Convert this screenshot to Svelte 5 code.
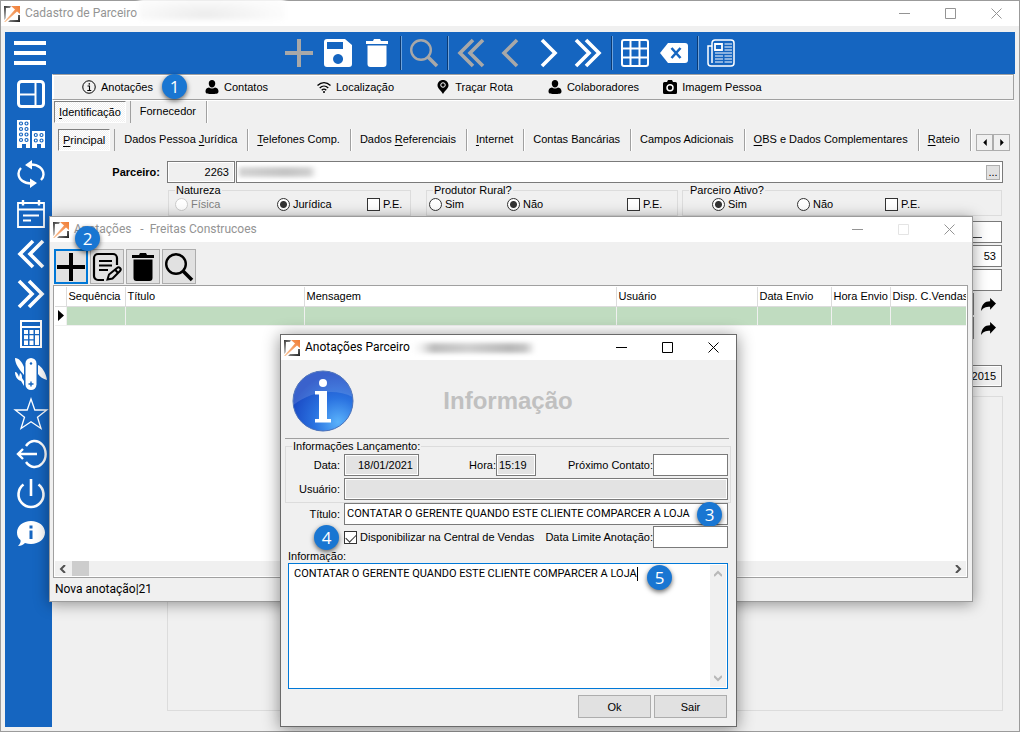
<script lang="ts">
    const shortcuts = [
        { icon: 'info', label: 'Anotações' },
        { icon: 'person', label: 'Contatos' },
        { icon: 'wifi', label: 'Localização' },
        { icon: 'pin', label: 'Traçar Rota' },
        { icon: 'person', label: 'Colaboradores' },
        { icon: 'camera', label: 'Imagem Pessoa' },
    ];

    const toolbar = [
        { icon: 'plus', label: 'Novo', off: true },
        { icon: 'save', label: 'Salvar' },
        { icon: 'trash', label: 'Excluir' },
        null,
        { icon: 'search', label: 'Pesquisar', off: true },
        null,
        { icon: 'first', label: 'Primeiro', off: true },
        { icon: 'prev', label: 'Anterior', off: true },
        { icon: 'next', label: 'Próximo' },
        { icon: 'last', label: 'Último' },
        null,
        { icon: 'grid', label: 'Grade' },
        { icon: 'clear', label: 'Limpar' },
        null,
        { icon: 'news', label: 'Relatório' },
    ];

    const sidebar = [
        { icon: 'layout', label: 'Painel' },
        { icon: 'buildings', label: 'Empresas' },
        { icon: 'sync', label: 'Atualizar' },
        { icon: 'calendar', label: 'Agenda' },
        { icon: 'first', label: 'Voltar' },
        { icon: 'last', label: 'Avançar' },
        { icon: 'calc', label: 'Calculadora' },
        { icon: 'knife', label: 'Ferramentas' },
        { icon: 'star', label: 'Favoritos' },
        { icon: 'exit', label: 'Trocar usuário' },
        { icon: 'power', label: 'Desligar' },
        { icon: 'bubble', label: 'Ajuda' },
    ];

    // [before, access key, after]
    const tabs = [
        ['', 'P', 'rincipal'],
        ['Dados Pessoa ', 'J', 'urídica'],
        ['', 'T', 'elefones Comp.'],
        ['Dados ', 'R', 'eferenciais'],
        ['', 'I', 'nternet'],
        ['Contas Bancárias', '', ''],
        ['Campos Adicionais', '', ''],
        ['', 'O', 'BS e Dados Complementares'],
        ['', 'R', 'ateio'],
    ];

    const noteTools = [
        { icon: 'plus', label: 'Nova anotação' },
        { icon: 'edit', label: 'Editar anotação' },
        { icon: 'trash', label: 'Excluir anotação' },
        { icon: 'search', label: 'Pesquisar anotação' },
    ];

    const columns = [
        { label: 'Sequência', cls: 'seq' },
        { label: 'Título', cls: 'title-col' },
        { label: 'Mensagem', cls: 'msg' },
        { label: 'Usuário', cls: 'user' },
        { label: 'Data Envio', cls: 'date' },
        { label: 'Hora Envio', cls: 'hour' },
        { label: 'Disp. C.Vendas', cls: 'disp' },
    ];

    let activeTab = $state(0);
    let natureza = $state('juridica');
    let rural = $state('nao');
    let ativo = $state('sim');
    let titulo = $state('CONTATAR O GERENTE QUANDO ESTE CLIENTE COMPARCER A LOJA');
    let informacao = $state('CONTATAR O GERENTE QUANDO ESTE CLIENTE COMPARCER A LOJA');
    let disponivel = $state(true);
</script>

{#snippet icon(name: string)}
    <svg class="icon" viewBox="0 0 28 28" fill="none" stroke="currentColor" stroke-width="2" aria-hidden="true">
        {#if name === 'plus'}
            <path d="M14 0v28M0 14h28" stroke-width="4" />
        {:else if name === 'save'}
            <path d="M3 0h18l7 6v19a3 3 0 0 1-3 3H3a3 3 0 0 1-3-3V3a3 3 0 0 1 3-3zM3 3v7h16V3zM14 15a5 5 0 1 0 .1 0z" fill="currentColor" fill-rule="evenodd" stroke="none" />
        {:else if name === 'trash'}
            <path d="M3 2h7l1-2h6l1 2h7v3H3zM4.500 6.500h19v18.500a3 3 0 0 1-3 3h-13a3 3 0 0 1-3-3z" fill="currentColor" stroke="none" />
        {:else if name === 'search'}
            <circle cx="11" cy="11" r="9.800" stroke-width="2.400" />
            <path d="M18 18l9 9" stroke-width="3.600" />
        {:else if name === 'first'}
            <path d="M16 1L3 14l13 13M26 1L13 14l13 13" stroke-width="3.600" />
        {:else if name === 'prev'}
            <path d="M21 1L8 14l13 13" stroke-width="3.600" />
        {:else if name === 'next'}
            <path d="M7 1l13 13L7 27" stroke-width="3.600" />
        {:else if name === 'last'}
            <path d="M2 1l13 13L2 27M12 1l13 13L12 27" stroke-width="3.600" />
        {:else if name === 'grid'}
            <rect x="1" y="1" width="26" height="26" rx="2" />
            <path d="M9.500 1v26M18.500 1v26M1 9.500h26M1 18.500h26" />
        {:else if name === 'clear'}
            <path d="M8 4h17a3 3 0 0 1 3 3v14a3 3 0 0 1-3 3H8L0 14z" fill="currentColor" stroke="none" />
            <path d="M11.500 9l9 10M20.500 9l-9 10" stroke="#1565c0" stroke-width="2.600" />
        {:else if name === 'news'}
            <path d="M5 24V4a3 3 0 0 1 3-3h16a3 3 0 0 1 3 3v20a3 3 0 0 1-3 3H4a3 3 0 0 1-3-3V7h4" stroke-width="1.500" />
            <path d="M8 5h7v6H8z" stroke-width="1.800" />
            <path d="M17.500 5H25M17.500 8H25M17.500 11H25M8 14h17M8 17h8M17.500 17H25M8 20h8M17.500 20H25M8 23h8M17.500 23H25" stroke-width="1" />
        {:else if name === 'layout'}
            <rect x="1.500" y="1.500" width="25" height="25" rx="3" stroke-width="3" />
            <path d="M18.500 3v22M2 14.500h16" />
        {:else if name === 'buildings'}
            <path d="M0 0h13v28H9v-4H5v4H0zM15 11h13v17h-4v-4h-4v4h-5z" fill="currentColor" stroke="none" />
            <g fill="#fff" stroke="#1565c0" stroke-width="1.200">
                <circle cx="4" cy="3.500" r="1.500" /><circle cx="9.500" cy="3.500" r="1.500" />
                <circle cx="4" cy="9" r="1.500" /><circle cx="9.500" cy="9" r="1.500" />
                <circle cx="4" cy="14.500" r="1.500" /><circle cx="9.500" cy="14.500" r="1.500" />
                <circle cx="4" cy="20" r="1.500" /><circle cx="9.500" cy="20" r="1.500" />
                <circle cx="18.800" cy="15" r="1.500" /><circle cx="24.500" cy="15" r="1.500" />
                <circle cx="18.800" cy="20.500" r="1.500" /><circle cx="24.500" cy="20.500" r="1.500" />
            </g>
        {:else if name === 'sync'}
            <path d="M14 4.500c7 0 12.500 4 12.500 10 0 2-1 4-2.500 5.500M14 23.500c-7 0-12.500-4-12.500-10 0-2 1-4 2.500-5.500" stroke-width="2.400" />
            <path d="M8 5l7-5v9.500zM20 23l-7 5v-9.500z" fill="currentColor" stroke="none" />
        {:else if name === 'calendar'}
            <path d="M1 3h26v24H1zM1 9.500h26M6 15.500h16M6 20.500h8" stroke-width="1.800" />
            <path d="M6 0v5.500M22 0v5.500" stroke-width="2.400" />
        {:else if name === 'calc'}
            <path d="M4 1h20v26H4zM4 7h20" stroke-width="2" />
            <path d="M7 10h4v4H7zM12.500 10h4v4h-4zM18 10h4v4h-4zM7 15.200h4v4H7zM12.500 15.200h4v4h-4zM18 15.200h4V25h-4zM7 20.500h4V25H7zM12.500 20.500h4V25h-4z" fill="currentColor" stroke="none" />
        {:else if name === 'knife'}
            <rect x="8.500" y="-2" width="11" height="32" rx="5.500" fill="currentColor" stroke="none" />
            <path d="M21 5c3 1 8 7 9 15-4-1-7-3-9-6zM-2-2c4 0 7 4 9 9v8C2 9-2 4-2-2zM-2 12c2 0 3 2 4 5l1-4c2 1 2 3 2 5l2 3v5l-3-5c-4-1-6-5-6-9z" fill="currentColor" stroke="none" />
            <path d="M14 21.500v5M11.500 24h5" stroke="#1565c0" stroke-width="1.400" />
            <circle cx="14" cy="3.500" r="1.200" fill="#1565c0" stroke="none" />
        {:else if name === 'star'}
            <path d="M14-1l3.800 11h12L20.500 17.200 24 28.500 14 21.700 4 28.500l3.500-11.300L-1.800 10h12z" stroke-width="1.300" />
        {:else if name === 'exit'}
            <path d="M9 6A11 13 0 1 1 9 22M1 14h19M6 9l-5 5 5 5" stroke-width="2.400" />
        {:else if name === 'power'}
            <path d="M6.500 4.500a12.500 12.500 0 1 0 15 0M14-1v17" stroke-width="2.600" />
        {:else if name === 'bubble'}
            <path d="M14 1c8 0 14 5 14 11.500S22 24 14 24c-2 0-4-.3-6-1-2 2-4 3-7 3 2-2 3-4 2.500-6C1 18 0 15.500 0 12.500 0 6 6 1 14 1z" fill="currentColor" stroke="none" />
            <path d="M14 10.500V19M14 5.500v3" stroke="#1565c0" stroke-width="3" />
        {:else if name === 'edit'}
            <path d="M11 27H5a4 4 0 0 1-4-4V5a4 4 0 0 1 4-4h15a4 4 0 0 1 4 4v7M6 8h13M6 12.500h13M6 17h9" stroke-width="2.200" />
            <path d="M14.500 26.500l1.500-5 8-6.500a2 2 0 0 1 3 3l-7.500 7.500zM22 16.500l3 3.500" stroke-width="2" />
        {:else if name === 'info'}
            <circle cx="14" cy="14" r="12.500" />
            <path d="M11 12h4v8M10.500 21h8M14.500 6v3.500" stroke-width="2.200" />
        {:else if name === 'person'}
            <path d="M14 0c4 0 6.500 3 6.500 7S18 15 14 15 7.500 11 7.500 7 10 0 14 0zM8 15c3 2.500 9 2.500 12 0 5 1 7 3 7 8s-6 5-13 5-13 0-13-5 2-7 7-8z" fill="currentColor" stroke="none" />
        {:else if name === 'wifi'}
            <path d="M1 11c8-7.500 18-7.500 26 0M5.500 16c5-5 12-5 17 0M9.500 20.500c3-3 6-3 9 0" stroke-width="2.800" />
            <circle cx="14" cy="24" r="2" fill="currentColor" stroke="none" />
        {:else if name === 'pin'}
            <path d="M14 0c6 0 11 4.500 11 10.500C25 17 18 21 14 28 10 21 3 17 3 10.500 3 4.500 8 0 14 0z" fill="currentColor" stroke="none" />
            <circle cx="14" cy="10" r="4.500" stroke="#fff" />
        {:else if name === 'camera'}
            <path d="M3 4h5l2-4h8l2 4h5a3 3 0 0 1 3 3v18a3 3 0 0 1-3 3H3a3 3 0 0 1-3-3V7a3 3 0 0 1 3-3z" fill="currentColor" stroke="none" />
            <circle cx="14" cy="15.500" r="6" stroke="#fff" stroke-width="3" />
        {:else if name === 'forward'}
            <path d="M28 12L17 2v6C7 8 1 14 0 26c4-6 8-8 17-8v6z" fill="currentColor" stroke="none" />
        {/if}
    </svg>
{/snippet}

{#snippet titleBar(title: string, id: string)}
    <header class="titlebar">
        <svg class="logo" viewBox="0 0 16 16" aria-hidden="true">
            <defs>
                <linearGradient id="{id}-frame" x1="0" y1="0" x2="1" y2="1">
                    <stop offset="0" stop-color="#333" />
                    <stop offset=".4" stop-color="#bbb" />
                    <stop offset="1" stop-color="#1c1c1c" />
                </linearGradient>
                <linearGradient id="{id}-arrow" x1="0" y1="1" x2="1" y2="0">
                    <stop offset="0" stop-color="#fbc9a0" />
                    <stop offset="1" stop-color="#f07c34" />
                </linearGradient>
            </defs>
            <path d="M0 0h7L6 2H2v10l-2 2zM16 9v7H4l2-2h8V9z" fill="url(#{id}-frame)" />
            <path d="M7 0h9v8l-3-2.500L1.500 16H0L11 3.500z" fill="url(#{id}-arrow)" />
        </svg>
        <h1>{title}</h1>
        <span class="redacted" aria-hidden="true"></span>
        <div class="controls">
            <button aria-label="Minimizar"><svg viewBox="0 0 11 11"><path d="M0 5.500h11" /></svg></button>
            <button class="max" aria-label="Maximizar"><svg viewBox="0 0 11 11"><path d="M.5.500h10v10H.5z" /></svg></button>
            <button aria-label="Fechar"><svg viewBox="0 0 11 11"><path d="M.5.500l10 10M10.500.500l-10 10" /></svg></button>
        </div>
    </header>
{/snippet}

<main class="window app">
    {@render titleBar('Cadastro de Parceiro', 'app')}

    <div class="frame">
        <div class="topbar">
            <button class="burger" aria-label="Menu"><i></i><i></i><i></i></button>
            <div class="tools">
                {#each toolbar as item}
                    {#if item}
                        <button class="tool" disabled={item.off} aria-label={item.label}>{@render icon(item.icon)}</button>
                    {:else}
                        <span class="tool-sep"></span>
                    {/if}
                {/each}
            </div>
        </div>

        <div class="columns">
            <nav class="sidebar">
                {#each sidebar as item}
                    <button aria-label={item.label}>{@render icon(item.icon)}</button>
                {/each}
            </nav>

            <section class="content">
                <div class="shortcuts">
                    {#each shortcuts as item}
                        <button>{@render icon(item.icon)}{item.label}</button>
                    {/each}
                </div>

                <div class="tabs main-tabs">
                    <button class="tab active"><u>I</u>dentificação</button>
                    <button class="tab">Fornecedor</button>
                </div>

                <div class="tabs sub-tabs">
                    {#each tabs as [before, key, after], i}
                        <button class="tab" class:active={i === activeTab} onclick={() => (activeTab = i)}>{before}<u>{key}</u>{after}</button>
                    {/each}
                    <div class="tab-scroll">
                        <button aria-label="Abas anteriores"><svg viewBox="0 0 4 8"><path d="M4 0v8L0 4z" /></svg></button>
                        <button aria-label="Próximas abas"><svg viewBox="0 0 4 8"><path d="M0 0v8l4-4z" /></svg></button>
                    </div>
                </div>

                <form class="partner">
                    <div class="code-row">
                        <label for="code">Parceiro:</label>
                        <input id="code" class="field readonly right" value="2263" readonly />
                        <div class="field lookup">
                            <span class="redacted" aria-hidden="true"></span>
                            <button type="button" aria-label="Buscar parceiro">...</button>
                        </div>
                    </div>

                    <div class="groups">
                        <fieldset class="natureza">
                            <legend>Natureza</legend>
                            <label class="muted"><input type="radio" bind:group={natureza} value="fisica" disabled />Física</label>
                            <label><input type="radio" bind:group={natureza} value="juridica" />Jurídica</label>
                            <label><input type="checkbox" />P.E.</label>
                        </fieldset>
                        <fieldset class="rural">
                            <legend>Produtor Rural?</legend>
                            <label><input type="radio" bind:group={rural} value="sim" />Sim</label>
                            <label><input type="radio" bind:group={rural} value="nao" />Não</label>
                            <label><input type="checkbox" />P.E.</label>
                        </fieldset>
                        <fieldset class="ativo">
                            <legend>Parceiro Ativo?</legend>
                            <label><input type="radio" bind:group={ativo} value="sim" />Sim</label>
                            <label><input type="radio" bind:group={ativo} value="nao" />Não</label>
                            <label><input type="checkbox" />P.E.</label>
                        </fieldset>
                    </div>

                    <div class="details">
                        <input class="field right masked" aria-label="Telefone" value="__________" />
                        <input class="field right" aria-label="Número" value="53" />
                        <input class="field" aria-label="Complemento" />
                        <div class="jump">
                            <input class="field" aria-label="Cidade" />
                            <button type="button" aria-label="Abrir cidade">{@render icon('forward')}</button>
                        </div>
                        <div class="jump">
                            <input class="field" aria-label="Região" />
                            <button type="button" aria-label="Abrir região">{@render icon('forward')}</button>
                        </div>
                        <input class="field readonly right since" aria-label="Data de cadastro" value="/2015" readonly />
                    </div>
                    <div class="panel"></div>
                </form>
            </section>
        </div>
    </div>
    <span class="badge b1">1</span>

    <section class="window notes">
        {@render titleBar('Anotações   -  Freitas Construcoes', 'notes')}
        <div class="note-tools">
            {#each noteTools as item, i}
                <button class:focused={i === 0} aria-label={item.label}>{@render icon(item.icon)}</button>
            {/each}
        </div>
        <div class="grid-box">
            <table>
                <thead>
                    <tr>
                        <th class="mark"></th>
                        {#each columns as col}
                            <th class={col.cls}>{col.label}</th>
                        {/each}
                    </tr>
                </thead>
                <tbody>
                    <tr>
                        <td class="mark"><svg viewBox="0 0 6 11"><path d="M0 0v11l6-5.500z" /></svg></td>
                        {#each columns as _}
                            <td></td>
                        {/each}
                    </tr>
                </tbody>
            </table>
            <div class="hscroll">
                <svg viewBox="0 0 6 8"><path d="M5 0L1 4l4 4" /></svg>
                <span class="thumb"></span>
                <svg viewBox="0 0 6 8"><path d="M1 0l4 4-4 4" /></svg>
            </div>
        </div>
        <footer>Nova anotação|21</footer>
        <span class="badge b2">2</span>
    </section>

    <section class="window dialog">
        {@render titleBar('Anotações Parceiro', 'dialog')}
        <form class="note-form">
            <div class="banner">
                <svg class="info" viewBox="0 0 62 62" aria-hidden="true">
                    <defs>
                        <radialGradient id="ball" cx=".75" cy=".85" r=".8">
                            <stop offset="0" stop-color="#5ab2fb" />
                            <stop offset=".5" stop-color="#2a72e0" />
                            <stop offset="1" stop-color="#1a49c4" />
                        </radialGradient>
                    </defs>
                    <circle cx="31" cy="31" r="30" fill="url(#ball)" stroke="#4a70b8" />
                    <path d="M1.500 35A29.500 29.500 0 0 1 60.500 27C44 18 18 21 1.500 35z" fill="#fff" opacity=".14" />
                    <circle cx="31" cy="13" r="4" fill="#fff" />
                    <path d="M23 21h12v28h4v3.500H23V49h4V24.500h-4z" fill="#fff" />
                </svg>
                <h2>Informação</h2>
            </div>

            <fieldset>
                <legend>Informações Lançamento:</legend>
                <div class="row">
                    <label class="lead" for="data">Data:</label>
                    <input id="data" class="field readonly right short" value="18/01/2021" readonly />
                    <label class="hora" for="hora">Hora:</label>
                    <input id="hora" class="field readonly tiny" value="15:19" readonly />
                    <label class="fill" for="proximo">Próximo Contato:</label>
                    <input id="proximo" class="field short" />
                </div>
                <div class="row">
                    <label class="lead" for="usuario">Usuário:</label>
                    <input id="usuario" class="field readonly grow" readonly />
                </div>
            </fieldset>

            <div class="row outer">
                <label class="lead" for="titulo">Título:</label>
                <input id="titulo" class="field grow typed" bind:value={titulo} />
                <span class="badge b3">3</span>
            </div>
            <div class="row outer">
                <span class="badge b4">4</span>
                <label class="check"><input type="checkbox" bind:checked={disponivel} />Disponibilizar na Central de Vendas</label>
                <label class="fill" for="limite">Data Limite Anotação:</label>
                <input id="limite" class="field short" />
            </div>

            <label class="memo-label" for="informacao">Informação:</label>
            <div class="memo">
                <textarea id="informacao" class="typed" bind:value={informacao} spellcheck="false"></textarea>
                <div class="vscroll">
                    <svg viewBox="0 0 8 6"><path d="M0 5l4-4 4 4" /></svg>
                    <svg viewBox="0 0 8 6"><path d="M0 1l4 4 4-4" /></svg>
                </div>
                <span class="caret"></span>
                <span class="badge b5">5</span>
            </div>

            <div class="actions">
                <button type="button">Ok</button>
                <button type="button">Sair</button>
            </div>
        </form>
    </section>
</main>

<style>
    :global(body) {
        background: #f0f0f0;
    }

    :global(*) {
        box-sizing: border-box;
    }

    main,
    button,
    input,
    textarea {
        font-family: "Liberation Sans", Arial, sans-serif;
        font-size: 11px;
        line-height: 14px;
        color: #000;
    }

    button {
        border: none;
        background: none;
        padding: 0;
        margin: 0;
    }

    u {
        text-underline-offset: 2px;
    }

    .icon {
        display: block;
        width: 28px;
        height: 28px;
        overflow: visible;
    }

    .window {
        display: flex;
        flex-direction: column;
        background: #f0f0f0;
        border: 1px solid #9b9b9b;
    }

    .app {
        position: relative;
        min-height: 100vh;
    }

    .titlebar {
        position: relative;
        display: flex;
        align-items: center;
        height: 25px;
        padding-left: 3px;
        background: #fff;
        color: #949494;
    }

    .titlebar h1 {
        margin: 0 0 0 5px;
        padding-bottom: 1px;
        font-family: Roboto, "Open Sans", sans-serif;
        font-size: 12px;
        font-weight: 400;
        white-space: pre;
    }

    .logo {
        width: 16px;
        height: 16px;
    }

    .controls {
        display: flex;
        margin-left: auto;
    }

    .controls button {
        display: flex;
        align-items: center;
        justify-content: center;
        width: 46px;
        height: 25px;
        color: inherit;
    }

    .controls svg {
        width: 11px;
        height: 11px;
        fill: none;
        stroke: currentColor;
    }

    .redacted {
        filter: blur(2px);
    }

    .app > .titlebar .redacted {
        position: absolute;
        left: 138px;
        top: -3px;
        width: 146px;
        height: 22px;
        background: radial-gradient(ellipse at 45% 75%, #ececec, #fafafa 60%, #fff);
    }

    .notes > .titlebar .redacted {
        display: none;
    }

    .dialog > .titlebar .redacted {
        width: 120px;
        height: 10px;
        margin-left: 4px;
        background: linear-gradient(90deg, #fbfbfb, #f0f0f0 6%, #bdbdbd 16%, #d0d0d0 45%, #b8b8b8 80%, #c4c4c4 92%, #f4f4f4);
    }

    .frame {
        flex: 1;
        display: flex;
        flex-direction: column;
        padding: 6px 4px 4px;
    }

    .topbar {
        display: grid;
        grid-template-columns: 1fr auto 1fr;
        align-items: center;
        height: 42px;
        background: #1565c0;
        color: #fff;
    }

    .burger {
        display: flex;
        flex-direction: column;
        gap: 6px;
        width: 32px;
        margin-left: 9px;
    }

    .burger i {
        height: 4px;
        background: #fff;
    }

    .tools {
        display: flex;
        align-items: center;
    }

    .tool {
        display: flex;
        justify-content: center;
        width: 39px;
        color: #fff;
    }

    .tool:disabled {
        color: #a8a8a8;
    }

    .tool-sep {
        width: 2px;
        height: 34px;
        margin: 0 3px;
        background: linear-gradient(90deg, #0b3a73 50%, #6ea3dc 50%);
    }

    .columns {
        flex: 1;
        display: flex;
    }

    .sidebar {
        width: 47px;
        padding-left: 12px;
        background: #1565c0;
    }

    .sidebar button {
        display: flex;
        align-items: center;
        height: 40px;
        color: #fff;
    }

    .content {
        flex: 1;
        display: flex;
        flex-direction: column;
        min-width: 0;
    }

    .shortcuts {
        display: flex;
        height: 26px;
        padding-left: 5px;
        margin-right: 1px;
        border: 1px solid #a0a0a0;
        border-left-color: #fff;
        box-shadow: inset 1px 1px #fff, 0 1px #fff;
    }

    .shortcuts button {
        display: flex;
        align-items: center;
        justify-content: center;
        gap: 5px;
        width: 119px;
    }

    .shortcuts .icon {
        width: 14px;
        height: 14px;
    }

    .tabs {
        display: flex;
    }

    .main-tabs {
        padding: 1px 0 0 2px;
    }

    .sub-tabs {
        padding: 6px 5px 0 6px;
    }

    .tab {
        height: 22px;
        padding: 0 10px 2px 9px;
        border-right: 1px solid #a0a0a0;
        box-shadow: 1px 0 #fff;
        white-space: nowrap;
    }

    .tab.active {
        padding: 0 4px;
        margin-right: 5px;
        border: 1px solid #fff;
        border-top-color: #808080;
        border-left-color: #808080;
        background: repeating-conic-gradient(#fff 0 25%, #f0f0f0 0 50%) 0 0 / 2px 2px;
        box-shadow: 4px 0 #f0f0f0, 5px 0 #a0a0a0;
    }

    .tab-scroll {
        display: flex;
        margin: 5px 0 0 auto;
    }

    .tab-scroll button {
        display: flex;
        align-items: center;
        justify-content: center;
        width: 17px;
        height: 17px;
        border: 1px solid #adadad;
    }

    .tab-scroll svg {
        width: 4px;
        height: 7px;
    }

    .partner {
        flex: 1;
        display: flex;
        flex-direction: column;
        padding: 10px 12px 16px 115px;
    }

    .field {
        height: 22px;
        min-width: 0;
        margin: 0;
        padding: 0 5px 1px 2px;
        border: 1px solid #7a7a7a;
        border-radius: 0;
        background: #fff;
        outline: none;
    }

    .field.readonly {
        background: #e3e3e3;
        box-shadow: inset 0 0 0 1px #fff;
    }

    .partner .readonly {
        background: #f0f0f0;
    }

    .typed {
        font-family: Roboto, Arial, sans-serif;
    }

    .right {
        text-align: right;
    }

    .code-row {
        display: flex;
        align-items: center;
        gap: 1px;
        margin-left: -60px;
    }

    .code-row label {
        width: 59px;
        padding-right: 6px;
        text-align: right;
        font-weight: 700;
    }

    .code-row input {
        width: 68px;
    }

    .lookup {
        flex: 1;
        display: flex;
        align-items: center;
        justify-content: space-between;
        padding: 2px;
    }

    .lookup .redacted {
        width: 78px;
        height: 10px;
        background: linear-gradient(90deg, #d4d4d4, #c4c4c4 60%, #d0d0d0 90%, #fff);
    }

    .lookup button {
        width: 14px;
        height: 15px;
        border: 1px solid #adadad;
        background: #e1e1e1;
        line-height: 12px;
    }

    .groups {
        display: flex;
        height: 33px;
        padding: 0 1px;
    }

    fieldset {
        min-width: 0;
        margin: 0;
        padding: 0;
        border: 1px solid #dcdcdc;
    }

    legend {
        padding: 0 1px;
        margin-left: 6px;
    }

    .groups fieldset {
        display: grid;
        align-items: center;
        padding-bottom: 4px;
    }

    .groups label,
    .check {
        display: flex;
        align-items: center;
        gap: 3px;
        white-space: nowrap;
    }

    .natureza {
        width: 243px;
        margin-right: 15px;
        grid-template-columns: 108px 90px auto;
    }

    .natureza .muted {
        padding-left: 6px;
        color: #808080;
    }

    .rural {
        width: 252px;
        margin-right: 4px;
        grid-template-columns: 80px 120px auto;
    }

    .rural label:first-of-type {
        padding-left: 2px;
    }

    .ativo {
        flex: 1;
        grid-template-columns: 114px 88px auto;
    }

    .ativo label:first-of-type {
        padding-left: 29px;
    }

    input[type="radio"],
    input[type="checkbox"] {
        appearance: none;
        position: relative;
        flex: none;
        width: 13px;
        height: 13px;
        margin: 0;
        border: 1px solid #333;
        background: #fff;
    }

    input[type="radio"] {
        border-radius: 50%;
    }

    input[type="radio"]:checked {
        background: radial-gradient(circle, #333 0 3px, #fff 4px);
    }

    input[type="radio"]:disabled {
        border-color: #ccc;
    }

    input[type="checkbox"]:checked::after {
        content: "";
        position: absolute;
        left: 1px;
        top: 2px;
        width: 9px;
        height: 5px;
        border: solid #333;
        border-width: 0 0 1px 1px;
        transform: rotate(-45deg);
    }

    .details {
        display: flex;
        flex-direction: column;
        gap: 2px;
        padding: 5px 1px 0 0;
    }

    .masked {
        padding-right: 19px;
    }

    .jump {
        display: flex;
    }

    .jump .field {
        flex: 1;
    }

    .jump button {
        width: 28px;
        padding-left: 7px;
    }

    .jump .icon {
        width: 15px;
        height: 15px;
    }

    .since {
        margin-top: 24px;
    }

    .panel {
        flex: 1;
        margin-top: 9px;
        border: 1px solid #dcdcdc;
    }

    .badge {
        position: absolute;
        display: flex;
        align-items: center;
        justify-content: center;
        width: 25px;
        height: 25px;
        border-radius: 50%;
        background: #1976d2;
        box-shadow: 0 2px 5px rgba(0, 0, 0, 0.6);
        color: #fff;
        font-family: "Open Sans", "Noto Sans", sans-serif;
        font-size: 17px;
    }

    .b1 {
        left: 161px;
        top: 73px;
    }

    .b2 {
        left: 25px;
        top: 9px;
    }

    .b3 {
        right: 9px;
        top: -1px;
    }

    .b4 {
        left: 29px;
        top: -1px;
    }

    .b5 {
        right: 55px;
        top: 1px;
    }

    .notes {
        position: absolute;
        left: 48px;
        right: 46px;
        top: 215px;
        box-shadow: 0 2px 14px rgba(0, 0, 0, 0.4);
    }

    .notes .max {
        color: #e4e4e4;
    }

    .note-tools {
        display: flex;
        gap: 2px;
        padding: 7px 4px 1px;
    }

    .note-tools button {
        display: flex;
        align-items: center;
        justify-content: center;
        width: 34px;
        height: 35px;
        border: 1px solid #adadad;
        background: #e1e1e1;
    }

    .note-tools .focused {
        border: 2px solid #0078d7;
    }

    .grid-box {
        display: flex;
        flex-direction: column;
        height: 293px;
        margin: 0 4px 0 3px;
        padding: 1px;
        border: 1px solid #a0a0a0;
        background: #fff;
    }

    table {
        width: 100%;
        table-layout: fixed;
        border-collapse: collapse;
    }

    th,
    td {
        height: 19px;
        padding: 0 0 0 2px;
        border-right: 1px solid #dcdcdc;
        border-bottom: 1px solid #dcdcdc;
        font-weight: 400;
        text-align: left;
        white-space: nowrap;
        overflow: hidden;
    }

    th:last-child,
    td:last-child {
        border-right: none;
    }

    td {
        background: #c0dcc0;
        border-color: #f0f0f0;
    }

    td.mark {
        background: #fff;
        padding: 0 0 0 3px;
    }

    .mark svg {
        display: block;
        width: 6px;
        height: 11px;
    }

    .mark {
        width: 11px;
    }

    .seq {
        width: 59px;
    }

    .title-col {
        width: 179px;
    }

    .user {
        width: 141px;
    }

    .date {
        width: 74px;
    }

    .hour {
        width: 59px;
    }

    .disp {
        width: 76px;
    }

    .hscroll {
        display: flex;
        align-items: center;
        gap: 5px;
        height: 15px;
        margin-top: auto;
        padding: 0 4px;
        background: #f0f0f0;
    }

    .hscroll svg,
    .vscroll svg {
        width: 8px;
        height: 8px;
        fill: none;
        stroke: #505050;
        stroke-width: 2;
    }

    .hscroll svg:last-child {
        margin-left: auto;
    }

    .thumb {
        width: 17px;
        height: 15px;
        background: #cdcdcd;
    }

    footer {
        padding: 4px 5px 5px;
        font-family: Roboto, "Open Sans", sans-serif;
        font-size: 12px;
    }

    .dialog {
        position: absolute;
        left: 279px;
        top: 333px;
        width: 457px;
        border-color: #6a6a6a;
        box-shadow: 0 2px 16px rgba(0, 0, 0, 0.45);
    }

    .dialog > .titlebar {
        color: #000;
    }

    .note-form {
        display: flex;
        flex-direction: column;
        padding: 0 5px 8px 4px;
    }

    .banner {
        display: grid;
        grid-template-columns: 62px 1fr 62px;
        align-items: center;
        height: 79px;
        margin-right: 2px;
        padding: 4px 5px 0 7px;
        border-bottom: 1px solid #a0a0a0;
    }

    .banner h2 {
        margin: 0;
        font-size: 24px;
        line-height: 28px;
        text-align: center;
        color: #c0c0c0;
    }

    .note-form fieldset {
        display: flex;
        flex-direction: column;
        gap: 2px;
        padding: 1px 2px 2px 0;
    }

    .row {
        position: relative;
        display: flex;
        align-items: center;
    }

    .outer {
        padding: 0 3px 0 1px;
        margin-bottom: 1px;
    }

    .lead {
        width: 58px;
        padding-right: 4px;
        text-align: right;
    }

    .hora {
        width: 77px;
        text-align: right;
    }

    .fill {
        flex: 1;
        text-align: right;
    }

    .grow {
        flex: 1;
    }

    .short {
        width: 75px;
    }

    .tiny {
        width: 40px;
    }

    .check {
        margin-left: 58px;
    }

    .memo-label {
        margin-left: 3px;
    }

    .memo {
        position: relative;
        display: flex;
        height: 126px;
        margin: 0 3px;
        padding: 1px;
        border: 1px solid #0078d7;
        background: #fff;
    }

    textarea {
        flex: 1;
        padding: 2px 4px;
        border: none;
        outline: none;
        resize: none;
        overflow: hidden;
        background: transparent;
    }

    .vscroll {
        display: flex;
        flex-direction: column;
        align-items: center;
        justify-content: space-between;
        width: 16px;
        padding: 5px 0;
        background: #f0f0f0;
    }

    .vscroll svg {
        stroke: #b8b8b8;
    }

    .caret {
        position: absolute;
        left: 348px;
        top: 3px;
        width: 1px;
        height: 14px;
        background: #000;
    }

    .actions {
        display: flex;
        justify-content: flex-end;
        gap: 3px;
        padding: 6px 4px 0 0;
    }

    .actions button {
        width: 73px;
        height: 23px;
        border: 1px solid #adadad;
        background: #e1e1e1;
    }
</style>
